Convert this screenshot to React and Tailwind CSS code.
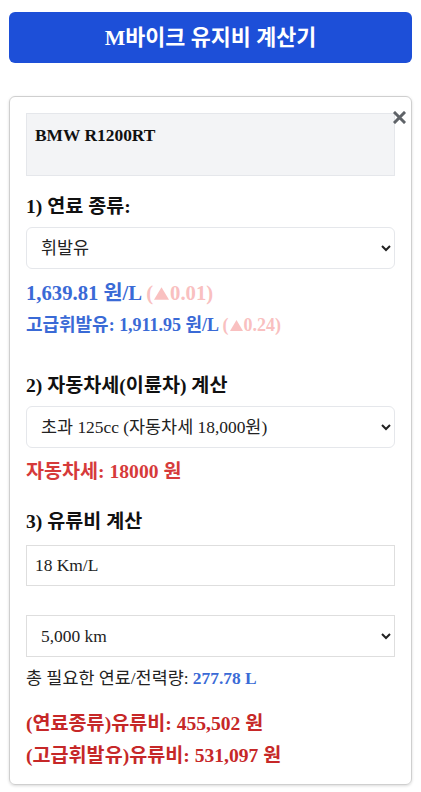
import { useState } from "react";

const font = "font-['Liberation_Serif','Noto_Sans_CJK_KR',serif] [font-size-adjust:0.5]";

function CloseIcon() {
  return (
    <svg width="13" height="13" viewBox="0 0 13 13" aria-hidden="true">
      <path d="M2 2 L11 11 M11 2 L2 11" stroke="#5f6368" strokeWidth="3" strokeLinecap="square" />
    </svg>
  );
}

function Up({ size = 12 }) {
  return (
    <svg
      width={size}
      height={size * 0.85}
      viewBox="0 0 12 10"
      className="inline-block align-baseline mx-[1px]"
      aria-label="▲"
    >
      <path d="M6 0 L12 10 L0 10 Z" fill="currentColor" />
    </svg>
  );
}

export default function App() {
  const [fuel, setFuel] = useState("gasoline");
  const [cc, setCc] = useState("over125");
  const [eff, setEff] = useState("18 Km/L");
  const [dist, setDist] = useState("5000");

  return (
    <div className={`${font} min-h-screen bg-white text-[#111] px-[9px] pt-3 pb-2 w-[421px]`}>
      <div className="h-[51px] rounded-md bg-[#1d4fd8] flex items-center justify-center">
        <h1 className="text-white text-[20px] font-bold">M바이크 유지비 계산기</h1>
      </div>

      <div className="relative mt-[33px] rounded-md border border-[#cfcfcf] shadow-[0_1px_3px_rgba(0,0,0,0.15)] px-4 pt-4 pb-[15px]">
        <button type="button" className="absolute top-[14px] right-[5px] leading-none">
          <CloseIcon />
        </button>

        <div className="h-[63px] bg-[#f3f4f6] border border-[#e5e7eb] px-[8px] pt-[9px]">
          <p className="text-[16px] font-bold leading-6">BMW R1200RT</p>
        </div>

        <h2 className="mt-[17px] text-[18px] font-bold leading-[28px]">1) 연료 종류:</h2>
        <select
          value={fuel}
          onChange={(e) => setFuel(e.target.value)}
          className="mt-[6px] w-full h-[42px] rounded-md border border-[#e5e7eb] bg-white px-[10px] text-[16px] text-[#222]"
        >
          <option value="gasoline">휘발유</option>
          <option value="diesel">경유</option>
          <option value="electric">전기</option>
        </select>
        <p className="mt-[11px] text-[19px] font-bold leading-[26px] text-[#3a6ad6]">
          1,639.81 원/L{" "}
          <span className="text-[#f9c0c0]">
            (<Up size={15} />0.01)
          </span>
        </p>
        <p className="mt-[7px] text-[16.5px] font-bold leading-6 text-[#3a6ad6]">
          고급휘발유: 1,911.95 원/L{" "}
          <span className="text-[#f9c0c0]">
            (<Up size={13} />0.24)
          </span>
        </p>

        <h2 className="mt-[35px] text-[18px] font-bold leading-[28px]">2) 자동차세(이륜차) 계산</h2>
        <select
          value={cc}
          onChange={(e) => setCc(e.target.value)}
          className="mt-[6px] w-full h-[42px] rounded-md border border-[#e5e7eb] bg-white px-[10px] text-[16px] text-[#222]"
        >
          <option value="under125">이하 125cc (자동차세 없음)</option>
          <option value="over125">초과 125cc (자동차세 18,000원)</option>
        </select>
        <p className="mt-[11px] text-[18px] font-bold leading-[26px] text-[#d63a3a]">자동차세: 18000 원</p>

        <h2 className="mt-[23px] text-[18px] font-bold leading-[28px]">3) 유류비 계산</h2>
        <input
          value={eff}
          onChange={(e) => setEff(e.target.value)}
          className="mt-[9px] block w-full h-[41px] border border-[#dedede] bg-white px-[8px] text-[16px] text-[#222] outline-none"
        />
        <select
          value={dist}
          onChange={(e) => setDist(e.target.value)}
          className="mt-[29px] w-full h-[42px] border border-[#dedede] bg-white px-[10px] text-[16px] text-[#222]"
        >
          <option value="1000">1,000 km</option>
          <option value="5000">5,000 km</option>
          <option value="10000">10,000 km</option>
        </select>
        <p className="mt-[9px] text-[16px] leading-6 text-[#222]">
          총 필요한 연료/전력량: <span className="font-bold text-[#3a6ad6]">277.78 L</span>
        </p>

        <p className="mt-[21px] text-[18px] font-bold leading-[26px] text-[#c62828]">(연료종류)유류비: 455,502 원</p>
        <p className="mt-[6px] text-[18px] font-bold leading-[26px] text-[#c62828]">(고급휘발유)유류비: 531,097 원</p>
      </div>
    </div>
  );
}
